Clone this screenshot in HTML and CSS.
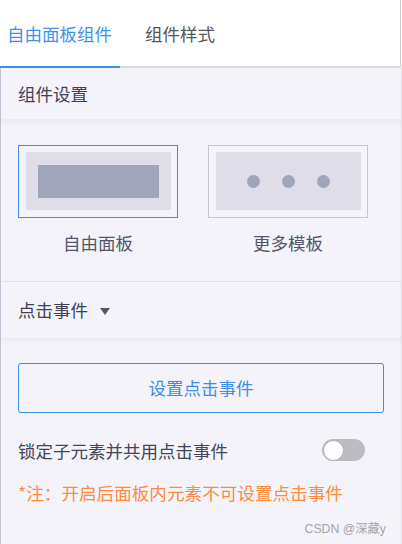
FILE: index.html
```html
<!DOCTYPE html>
<html lang="zh-CN">
<head>
<meta charset="utf-8">
<title>自由面板组件</title>
<link rel="stylesheet" href="styles.css">
</head>
<body>
<div class="app">
  <div class="tabs">
    <div class="tab active">自由面板组件</div>
    <div class="tab">组件样式</div>
  </div>
  <div class="panel">
    <div class="sec-head">组件设置</div>
    <div class="templates">
      <div class="tpl">
        <div class="tpl-box selected">
          <div class="tpl-inner"><div class="bar"></div></div>
        </div>
        <div class="tpl-label">自由面板</div>
      </div>
      <div class="tpl">
        <div class="tpl-box">
          <div class="tpl-inner dots"><span class="dot"></span><span class="dot"></span><span class="dot"></span></div>
        </div>
        <div class="tpl-label">更多模板</div>
      </div>
    </div>
    <div class="sec-head event-head">点击事件<span class="caret"></span></div>
    <div class="event-body">
      <div class="btn">设置点击事件</div>
      <div class="row">
        <span class="row-text">锁定子元素并共用点击事件</span>
        <span class="switch"><span class="knob"></span></span>
      </div>
      <div class="note">*注：开启后面板内元素不可设置点击事件</div>
      <div class="watermark">CSDN @深藏y</div>
    </div>
  </div>
</div>
</body>
</html>
```

FILE: styles.css
```css
* { box-sizing: border-box; }
html, body { margin: 0; padding: 0; background: #ffffff; }
body {
  font-family: "Noto Sans CJK SC", "Noto Sans", sans-serif;
  width: 402px;
  height: 544px;
  overflow: hidden;
}
.app { display: flex; flex-direction: column; height: 544px; }

.tabs {
  display: flex;
  width: 401px;
  height: 68px;
  background: #ffffff;
  border-right: 1px solid #c9c9cd;
  border-bottom: 2px solid #d9d9de;
}
.tab {
  height: 68px;
  line-height: 66px;
  padding-top: 1px;
  font-size: 17.5px;
  color: #555558;
  margin-bottom: -2px;
  border-bottom: 2px solid transparent;
}
.tab.active {
  width: 120px;
  padding-left: 7px;
  color: #3d92ef;
  border-bottom-color: #3a8fec;
}
.tab + .tab { margin-left: 25px; }

.panel {
  flex: 1;
  width: 402px;
  background: #f4f3f9;
  border-left: 1px solid #c5c3d4;
  border-right: 1px solid #e4e3ea;
  display: flex;
  flex-direction: column;
}
.sec-head {
  height: 51px;
  line-height: 51px;
  padding-left: 17px;
  font-size: 17.5px;
  color: #3f4254;
  box-shadow: 0 3px 6px rgba(40, 40, 80, 0.06);
  position: relative;
  z-index: 1;
  display: flex;
  align-items: center;
}
.templates {
  display: flex;
  gap: 30px;
  padding: 26px 0 0 17px;
  height: 163px;
  border-bottom: 1px solid #e2e1ea;
}
.tpl { display: flex; flex-direction: column; align-items: center; width: 160px; }
.tpl-box {
  width: 160px;
  height: 73px;
  border: 1px solid #c6c5d0;
  padding: 6px 6px 7px 7px;
}
.tpl-box.selected { border-color: #3d8ded; }
.tpl-inner {
  width: 100%;
  height: 100%;
  background: #dedde8;
  display: flex;
  align-items: center;
  justify-content: center;
}
.bar { width: 121px; height: 33px; background: #a0a5b9; }
.dots { gap: 22px; }
.dot { width: 13px; height: 13px; border-radius: 50%; background: #a0a5b9; }
.tpl-label {
  margin-top: 13px;
  font-size: 17.5px;
  line-height: 24px;
  color: #52566b;
}

.event-head { height: 56px; line-height: 56px; }
.caret {
  width: 0;
  height: 0;
  margin-left: 12px;
  margin-top: 2px;
  border-left: 5px solid transparent;
  border-right: 5px solid transparent;
  border-top: 7px solid #55586b;
}
.event-body {
  flex: 1;
  padding: 25px 17px 0 17px;
  display: flex;
  flex-direction: column;
}
.btn {
  width: 366px;
  height: 50px;
  line-height: 48px;
  border: 1px solid #3d8ded;
  border-radius: 3px;
  text-align: center;
  font-size: 17.5px;
  color: #3d8ded;
}
.row {
  margin-top: 26px;
  height: 22px;
  display: flex;
  align-items: center;
  justify-content: space-between;
  padding-right: 19px;
}
.row-text { font-size: 17.5px; color: #434658; line-height: 22px; margin-top: 2px; }
.switch {
  width: 43px;
  height: 22px;
  border-radius: 11px;
  background: #bcbbc1;
  display: flex;
  align-items: center;
  padding-left: 1px;
}
.knob {
  width: 21px;
  height: 21px;
  border-radius: 50%;
  background: #ffffff;
  border: 1px solid #b0afb6;
}
.note {
  margin-top: 20px;
  font-size: 17.6px;
  line-height: 24px;
  color: #ff8b3c;
}
.watermark {
  margin-top: 16px;
  align-self: flex-end;
  margin-right: -2px;
  font-family: "Liberation Sans", "Noto Sans CJK SC", sans-serif;
  font-size: 12.3px;
  line-height: 16px;
  color: #a3a3a8;
}
```
